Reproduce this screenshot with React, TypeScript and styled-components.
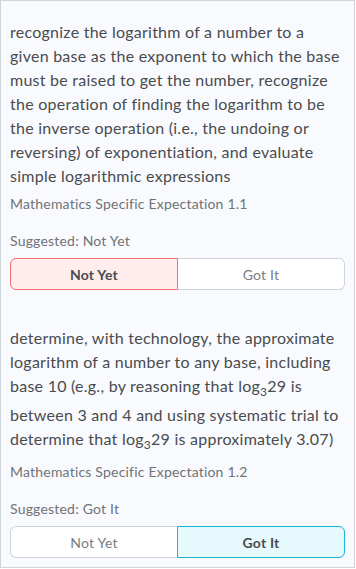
import React from "react";
import styled, { createGlobalStyle, css } from "styled-components";

const Global = createGlobalStyle`
  html, body { margin: 0; padding: 0; background: #ffffff; }
  body { font-family: Lato, "Open Sans", sans-serif; }
  * { box-sizing: border-box; }
`;

const Panel = styled.div`
  width: 355px;
  height: 568px;
  border: 1px solid #cdd5dc;
  background: #f9fafe;
  padding: 19px 9px 9px 9px;
  display: flex;
  flex-direction: column;
  gap: 36px;
`;

const Item = styled.section`
  display: flex;
  flex-direction: column;
`;

const Description = styled.div`
  font-size: 16px;
  line-height: 24px;
  color: #494c4e;
  letter-spacing: 0.25px;
  sub {
    font-size: 12px;
    line-height: 22px;
  }
`;

const Meta = styled.div`
  font-size: 14px;
  line-height: 20px;
  color: #6e7376;
  letter-spacing: 0.2px;
  margin-top: 6px;
`;

const Suggested = styled.div`
  font-size: 14px;
  line-height: 20px;
  color: #6e7376;
  letter-spacing: 0.2px;
  margin-top: 17px;
`;

const Toggle = styled.div`
  display: flex;
  margin-top: 7px;
  height: 32px;
`;

type Tone = "red" | "blue";

const Choice = styled.button<{ $selected: boolean; $tone: Tone; $side: "left" | "right" }>`
  flex: 1;
  font-family: Lato, "Open Sans", sans-serif;
  font-size: 14px;
  letter-spacing: 0.2px;
  background: #ffffff;
  color: #787d81;
  border: 1px solid #cdd5dc;
  padding: 0;
  cursor: pointer;
  ${(p) =>
    p.$side === "left"
      ? css`
          border-radius: 6px 0 0 6px;
          border-right: none;
        `
      : css`
          border-radius: 0 6px 6px 0;
          border-left: none;
        `}
  ${(p) =>
    p.$selected &&
    css`
      font-weight: 700;
      color: #494c4e;
      background: ${p.$tone === "red" ? "#ffeded" : "#e6f9fd"};
      border: 1px solid ${p.$tone === "red" ? "#f56b6f" : "#14b9d8"};
    `}
`;

type Data = {
  desc: React.ReactNode;
  meta: string;
  suggested: "Not Yet" | "Got It";
};

const items: Data[] = [
  {
    desc:
      "recognize the logarithm of a number to a given base as the exponent to which the base must be raised to get the number, recognize the operation of finding the logarithm to be the inverse operation (i.e., the undoing or reversing) of exponentiation, and evaluate simple logarithmic expressions",
    meta: "Mathematics Specific Expectation 1.1",
    suggested: "Not Yet",
  },
  {
    desc: (
      <>
        determine, with technology, the approximate logarithm of a number to any base, including
        base 10 (e.g., by reasoning that log<sub>3</sub>29 is between 3 and 4 and using systematic
        trial to determine that log<sub>3</sub>29 is approximately 3.07)
      </>
    ),
    meta: "Mathematics Specific Expectation 1.2",
    suggested: "Got It",
  },
];

export default function App() {
  return (
    <>
      <Global />
      <Panel>
        {items.map((it, i) => (
          <Item key={i}>
            <Description>{it.desc}</Description>
            <Meta>{it.meta}</Meta>
            <Suggested>Suggested: {it.suggested}</Suggested>
            <Toggle>
              <Choice $side="left" $tone="red" $selected={it.suggested === "Not Yet"}>
                Not Yet
              </Choice>
              <Choice $side="right" $tone="blue" $selected={it.suggested === "Got It"}>
                Got It
              </Choice>
            </Toggle>
          </Item>
        ))}
      </Panel>
    </>
  );
}
